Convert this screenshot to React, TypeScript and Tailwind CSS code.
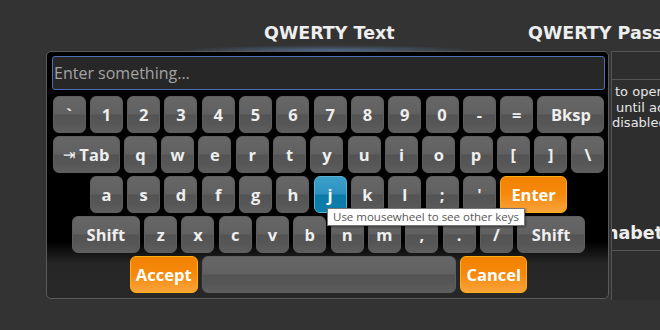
import React from "react";

type Variant = "default" | "hover" | "active";

const variantClass: Record<Variant, string> = {
  default:
    "border border-[#5e5e5e] bg-[linear-gradient(to_bottom,#676767_0%,#606060_48%,#535353_52%,#575757_80%,#5e5e5e_100%)] text-[#eeeeee]",
  hover:
    "border border-[#59b4d4] bg-[linear-gradient(to_bottom,#3d9fca_0%,#2c92c0_48%,#0b7ba7_52%,#0d7fab_100%)] text-white",
  active:
    "border border-[#ffaf0f] bg-[linear-gradient(to_bottom,#f38100_0%,#f58a0e_50%,#f8a33a_100%)] text-white",
};

function Key({
  children,
  w = "w-[33px]",
  v = "default",
}: {
  children?: React.ReactNode;
  w?: string;
  v?: Variant;
}) {
  return (
    <div
      className={`${w} h-[37px] shrink-0 rounded-[6px] flex items-center justify-center pt-[1px] text-[16.5px] font-bold leading-none ${variantClass[v]}`}
    >
      {children}
    </div>
  );
}

function Row({ children }: { children: React.ReactNode }) {
  return <div className="flex justify-center gap-[4.3px]">{children}</div>;
}

export default function App() {
  const row1 = ["`", "1", "2", "3", "4", "5", "6", "7", "8", "9", "0", "-", "="];
  const row2 = ["q", "w", "e", "r", "t", "y", "u", "i", "o", "p", "[", "]", "\\"];
  const row3 = ["a", "s", "d", "f", "g", "h", "j", "k", "l", ";", "'"];
  const row4 = ["z", "x", "c", "v", "b", "n", "m", ",", ".", "/"];

  return (
    <div className="relative w-[660px] h-[330px] overflow-hidden bg-[#333333] font-['Open_Sans',sans-serif]">
      {/* headings */}
      <div className="h-[51px] flex flex-col">
        <div className="flex pt-[23px] leading-[20px] text-[17.5px] font-bold text-[#eeeeee] font-['DejaVu_Sans',sans-serif] whitespace-nowrap">
          <div className="w-[264px] shrink-0" />
          <div className="w-[264px] shrink-0">QWERTY Text</div>
          <div>QWERTY Password</div>
        </div>
        <div className="mt-auto mx-auto w-[300px] h-[6px] bg-[radial-gradient(ellipse_at_bottom,rgba(110,165,235,0.5)_0%,rgba(110,165,235,0)_70%)]" />
      </div>

      <div className="flex">
        {/* keyboard */}
        <div className="ml-[46px] w-[563px] h-[248px] shrink-0 rounded-[5px] border border-[#5a5a5a] bg-[linear-gradient(to_bottom,#000000_0%,#000000_77%,#262626_86%,#282828_100%)] pt-[4px] pb-[5px] flex flex-col">
          <div className="ml-[5px] w-[553px] h-[34px] rounded-[3px] border border-[#4b6fb5] bg-[#272727] flex items-center pl-[1px] text-[16px] text-[#a3a3a3]">
            Enter something...
          </div>
          <div className="mt-[6px] pl-[2px] flex flex-col gap-[3px]">
            <Row>
              {row1.map((k) => (
                <Key key={k}>{k}</Key>
              ))}
              <Key w="w-[67px]">Bksp</Key>
            </Row>
            <Row>
              <Key w="w-[67px]">
                <span className="font-['DejaVu_Sans',sans-serif] text-[15px] font-normal mr-[4px]">⇥</span>
                Tab
              </Key>
              {row2.map((k) => (
                <Key key={k}>{k}</Key>
              ))}
            </Row>
            <Row>
              {row3.map((k) => (
                <Key key={k} v={k === "j" ? "hover" : "default"}>
                  {k}
                </Key>
              ))}
              <Key w="w-[67px]" v="active">
                Enter
              </Key>
            </Row>
            <Row>
              <Key w="w-[68px]">Shift</Key>
              {row4.map((k) => (
                <Key key={k}>{k}</Key>
              ))}
              <Key w="w-[68px]">Shift</Key>
            </Row>
            <Row>
              <Key w="w-[68px]" v="active">
                Accept
              </Key>
              <Key w="w-[254px]" />
              <Key w="w-[67px]" v="active">
                Cancel
              </Key>
            </Row>
          </div>
        </div>

        {/* side panel partially hidden */}
        <div className="ml-[2px] flex-1 min-w-0 h-[249px] border-l border-t border-[#555555] bg-[#2e2e2e] overflow-hidden flex flex-col font-['DejaVu_Sans',sans-serif] text-[#e6e6e6]">
          <div className="h-[28px] shrink-0 border-b border-[#555555]" />
          <div className="h-[143px] shrink-0 pt-[4px] text-[13px] leading-[15.5px] whitespace-nowrap">
            <div className="pl-[3px]">to open the keyboard</div>
            <div className="pl-[4px]">until accepted</div>
            <div className="pl-[0px]">disabled</div>
          </div>
          <div className="h-[28px] shrink-0 border-b border-[#555555] whitespace-nowrap text-[17.5px] leading-[20px] font-bold text-[#eeeeee]">
            <div className="ml-[-38px]">Alphabet</div>
          </div>
          <div className="flex-1" />
        </div>
      </div>

      {/* tooltip */}
      <div className="absolute left-[327px] top-[208px] h-[18px] px-[5px] flex items-center bg-white border border-[#767676] text-[11.5px] text-[#575757] whitespace-nowrap shadow-[1px_1px_2px_rgba(0,0,0,0.4)]">
        Use mousewheel to see other keys
      </div>
    </div>
  );
}
